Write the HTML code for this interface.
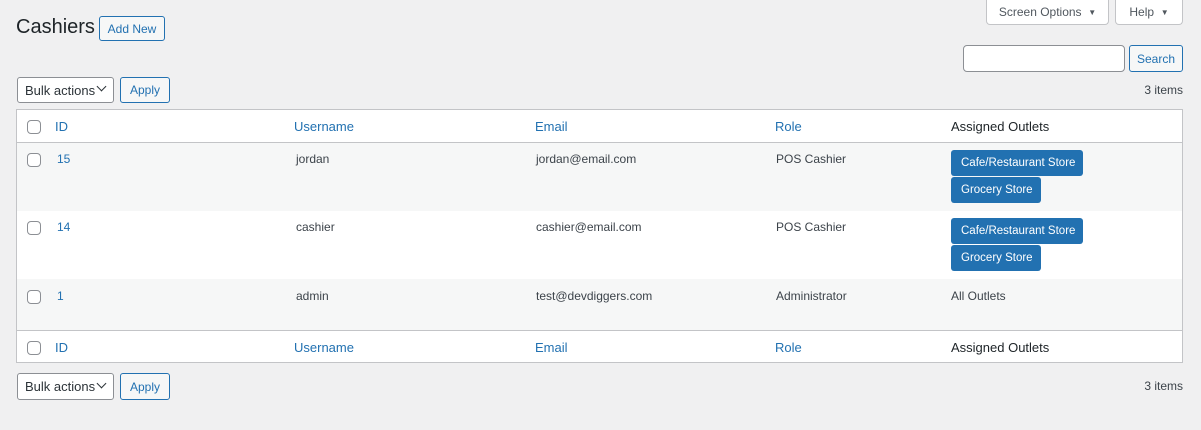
<!DOCTYPE html>
<html><head><meta charset="utf-8"><style>
*{box-sizing:border-box;margin:0;padding:0}
body{width:1201px;height:430px;background:#f0f0f1;font-family:"Liberation Sans",sans-serif;font-size:12px;color:#3c434a;position:relative;overflow:hidden;white-space:nowrap}
.a{position:absolute}
.btn{position:absolute;border:1px solid #2271b1;color:#2271b1;background:#f6f7f7;border-radius:3px;font-size:12px;display:flex;align-items:center;justify-content:center}
.sel{position:absolute;border:1px solid #8c8f94;background:#fff;border-radius:3px;font-size:13px;color:#2c3338;padding-left:7px;display:flex;align-items:center}
.cb{position:absolute;width:14px;height:14px;border:1px solid #8c8f94;border-radius:4px;background:#fff}
.lk{color:#2271b1;font-size:13px}
.badge{position:absolute;background:#2271b1;color:#fff;border-radius:3px;font-size:11.5px;display:flex;align-items:center;padding-left:10px;height:26px}
.r{position:absolute;right:18px}
</style></head><body>
<div class="a" style="left:986px;top:0;width:123px;height:25px;background:#fff;border:1px solid #c3c4c7;border-top:none;border-radius:0 0 4px 4px;font-size:12px;display:flex;align-items:center;justify-content:center;color:#50575e">Screen Options&nbsp;&nbsp;<span style="font-size:8px">▼</span></div>
<div class="a" style="left:1115px;top:0;width:68px;height:25px;background:#fff;border:1px solid #c3c4c7;border-top:none;border-radius:0 0 4px 4px;font-size:12px;display:flex;align-items:center;justify-content:center;color:#50575e">Help&nbsp;&nbsp;<span style="font-size:8px">▼</span></div>
<div class="a" style="left:16px;top:16px;font-size:20px;color:#1d2327">Cashiers</div>
<div class="btn" style="left:99px;top:16px;width:66px;height:25px">Add New</div>
<div class="a" style="left:963px;top:45px;width:162px;height:27px;background:#fff;border:1px solid #8c8f94;border-radius:4px"></div>
<div class="btn" style="left:1129px;top:45px;width:54px;height:27px">Search</div>
<div class="sel" style="left:17px;top:77px;width:97px;height:26px">Bulk actions<span style="position:absolute;right:8px;top:5px;width:7px;height:7px;border-right:1.5px solid #2c3338;border-bottom:1.5px solid #2c3338;transform:rotate(45deg)"></span></div>
<div class="btn" style="left:120px;top:77px;width:50px;height:26px">Apply</div>
<div class="r" style="top:83px">3 items</div>
<div class="a" style="left:16px;top:109px;width:1167px;height:254px;background:#fff;border:1px solid #c3c4c7"></div>
<div class="a" style="left:17px;top:142px;width:1165px;height:1px;background:#c3c4c7"></div>
<div class="a" style="left:17px;top:143px;width:1165px;height:68px;background:#f6f7f7"></div>
<div class="a" style="left:17px;top:279px;width:1165px;height:51px;background:#f6f7f7"></div>
<div class="a" style="left:17px;top:330px;width:1165px;height:1px;background:#c3c4c7"></div>
<div class="cb" style="left:27px;top:120px"></div>
<div class="a lk" style="left:55px;top:119px">ID</div>
<div class="a lk" style="left:294px;top:119px">Username</div>
<div class="a lk" style="left:535px;top:119px">Email</div>
<div class="a lk" style="left:775px;top:119px">Role</div>
<div class="a" style="left:951px;top:119px;font-size:13px;color:#1d2327">Assigned Outlets</div>
<div class="cb" style="left:27px;top:153px"></div>
<div class="a" style="left:57px;top:152px;color:#2271b1">15</div>
<div class="a" style="left:296px;top:152px">jordan</div>
<div class="a" style="left:536px;top:152px">jordan@email.com</div>
<div class="a" style="left:776px;top:152px">POS Cashier</div>
<div class="badge" style="left:951px;top:150px;width:132px">Cafe/Restaurant Store</div>
<div class="badge" style="left:951px;top:177px;width:90px">Grocery Store</div>
<div class="cb" style="left:27px;top:221px"></div>
<div class="a" style="left:57px;top:220px;color:#2271b1">14</div>
<div class="a" style="left:296px;top:220px">cashier</div>
<div class="a" style="left:536px;top:220px">cashier@email.com</div>
<div class="a" style="left:776px;top:220px">POS Cashier</div>
<div class="badge" style="left:951px;top:218px;width:132px">Cafe/Restaurant Store</div>
<div class="badge" style="left:951px;top:245px;width:90px">Grocery Store</div>
<div class="cb" style="left:27px;top:290px"></div>
<div class="a" style="left:57px;top:289px;color:#2271b1">1</div>
<div class="a" style="left:296px;top:289px">admin</div>
<div class="a" style="left:536px;top:289px">test@devdiggers.com</div>
<div class="a" style="left:776px;top:289px">Administrator</div>
<div class="a" style="left:951px;top:289px">All Outlets</div>
<div class="cb" style="left:27px;top:341px"></div>
<div class="a lk" style="left:55px;top:340px">ID</div>
<div class="a lk" style="left:294px;top:340px">Username</div>
<div class="a lk" style="left:535px;top:340px">Email</div>
<div class="a lk" style="left:775px;top:340px">Role</div>
<div class="a" style="left:951px;top:340px;font-size:13px;color:#1d2327">Assigned Outlets</div>
<div class="sel" style="left:17px;top:373px;width:97px;height:27px">Bulk actions<span style="position:absolute;right:8px;top:6px;width:7px;height:7px;border-right:1.5px solid #2c3338;border-bottom:1.5px solid #2c3338;transform:rotate(45deg)"></span></div>
<div class="btn" style="left:120px;top:373px;width:50px;height:27px">Apply</div>
<div class="r" style="top:379px">3 items</div>
</body></html>
